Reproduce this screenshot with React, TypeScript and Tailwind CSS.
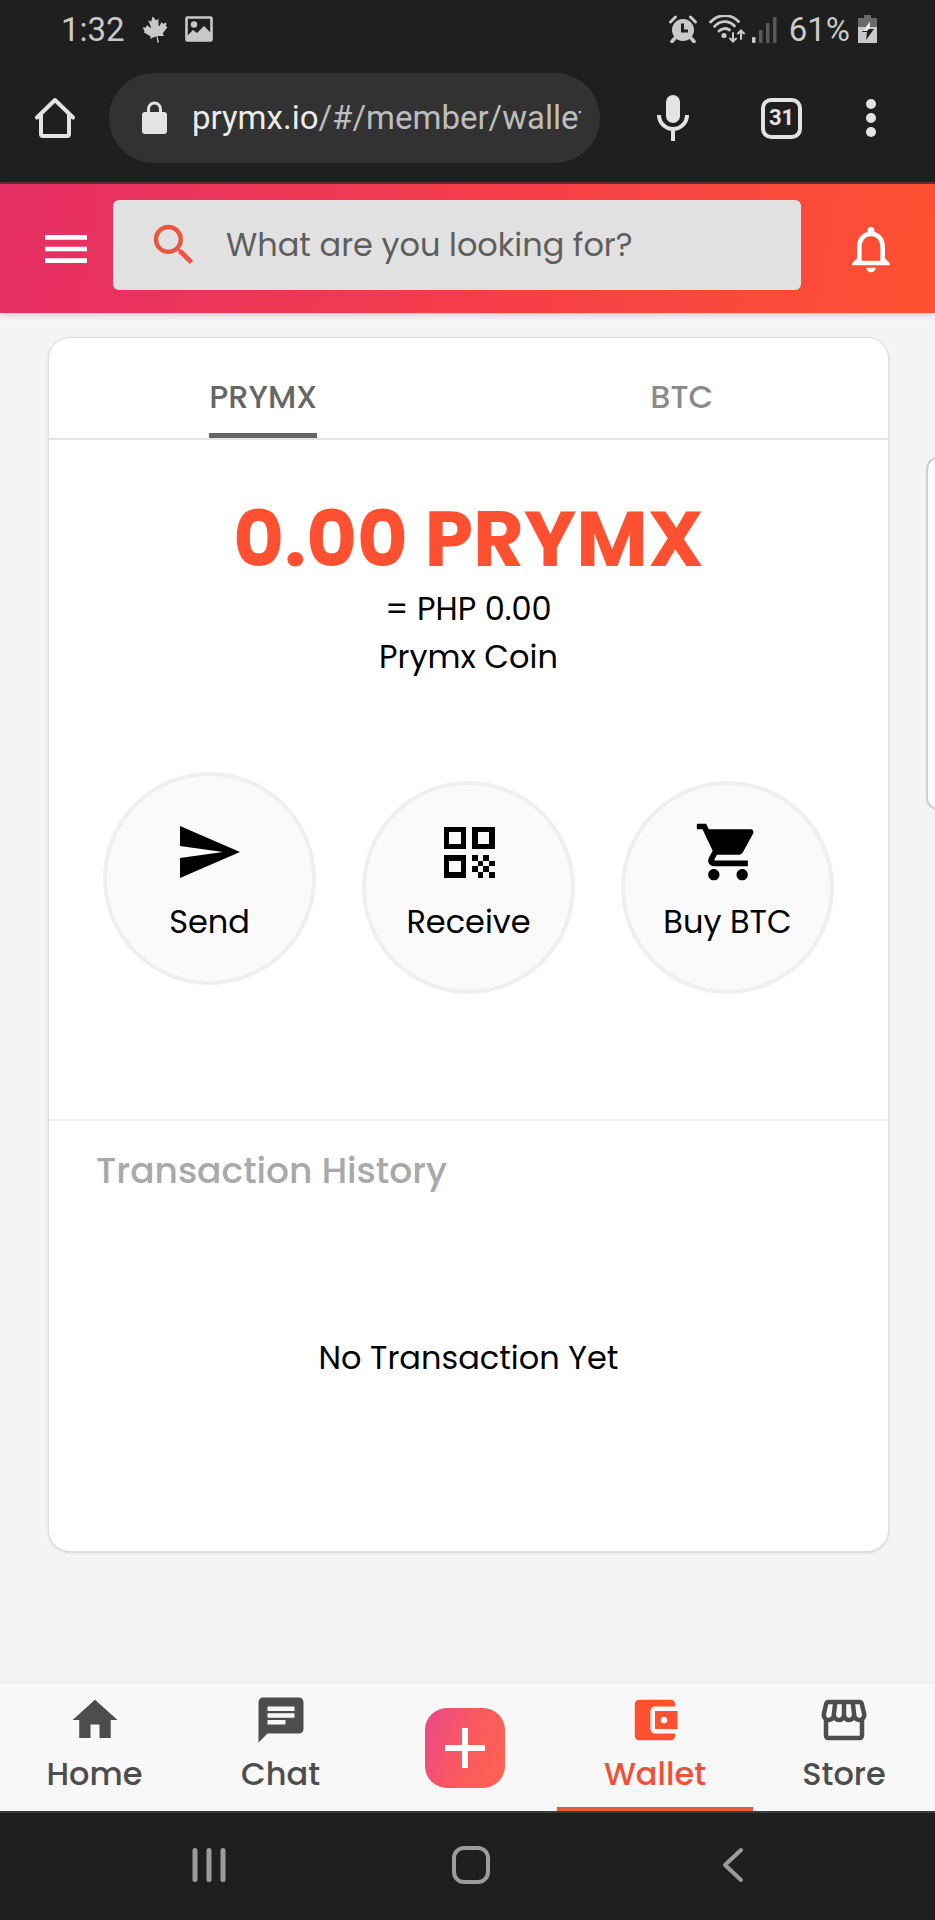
import React, { useState } from "react";
import { FaCanadianMapleLeaf } from "react-icons/fa";
import {
  MdAccountBalanceWallet,
  MdChat,
  MdHome,
  MdMenu,
  MdNotificationsNone,
  MdOutlineStorefront,
  MdSearch,
  MdShoppingCart,
} from "react-icons/md";

const StatusBar: React.FC = () => (
  <div className="flex items-center justify-between h-[58px] pl-[61px] pr-[58px] text-[#c9c9c9] font-['Roboto',sans-serif] text-[33px] leading-none">
    <div className="flex items-center">
      <span>1:32</span>
      <FaCanadianMapleLeaf className="ml-[17px] size-[27px] -rotate-12" />
      <svg className="ml-4 w-7 h-[26px]" viewBox="0 0 28 26" fill="none">
        <rect x="1.5" y="1.5" width="25" height="23" rx="1" stroke="currentColor" strokeWidth="2.6" />
        <circle cx="9" cy="8.5" r="3.2" fill="currentColor" />
        <path d="M2 20l6-6 4 3 7-7 7 7v8H2z" fill="currentColor" />
      </svg>
    </div>
    <div className="flex items-center">
      <svg className="w-7 h-7" viewBox="0 0 28 28" fill="none">
        <circle cx="14" cy="15" r="11" fill="currentColor" />
        <path d="M1.5 7l5-5M26.5 7l-5-5" stroke="currentColor" strokeWidth="3" strokeLinecap="round" />
        <path d="M6 23l-3 3.5M22 23l3 3.5" stroke="currentColor" strokeWidth="3.5" strokeLinecap="round" />
        <path d="M13.5 8.5V16H19" stroke="#1f1f1f" strokeWidth="3" />
      </svg>
      <svg className="ml-3 w-9 h-7" viewBox="0 0 36 28" fill="none" stroke="currentColor" strokeWidth="2.8" strokeLinecap="round">
        <path d="M1.5 7a19 19 0 0 1 28-.5" />
        <path d="M5.5 11.5a13 13 0 0 1 20-.5" />
        <path d="M10 16a8 8 0 0 1 10.5-1" />
        <circle cx="15" cy="20.5" r="1.2" fill="currentColor" />
        <path d="M24 18v8M21 23.500l3 3 3-3M32 24v-8M29 18.500l3-3 3 3" strokeWidth="2" />
      </svg>
      <svg className="ml-1.5 w-[26px] h-[27px]" viewBox="0 0 26 27">
        <rect x="1" y="21" width="3.5" height="6" rx="1" fill="currentColor" />
        <rect x="8" y="14" width="3.5" height="13" rx="1" fill="#5a5a5a" />
        <rect x="15" y="7" width="3.5" height="20" rx="1" fill="#5a5a5a" />
        <rect x="22" y="1" width="3.5" height="26" rx="1" fill="#5a5a5a" />
      </svg>
      <span className="ml-3">61%</span>
      <svg className="ml-2 w-[19px] h-7" viewBox="0 0 19 28">
        <path d="M6 0h7v3h6v10H0V3h6z" fill="#6a6a6a" />
        <path d="M0 12h19v16H0z" fill="currentColor" />
        <path d="M12 6.500L4 17h5l-1 8 8-11h-5z" fill="#1f1f1f" />
        <path d="M12 6.500L4.500 16H9l3-3z" fill="#e8e8e8" />
      </svg>
    </div>
  </div>
);

const BrowserBar: React.FC = () => (
  <div className="flex items-center h-[124px] pb-1 pl-[35px] pr-[59px] text-[#e3e3e3]">
    <button type="button" aria-label="Browser home">
      <svg className="w-10 h-[42px]" viewBox="0 0 40 42" fill="none" stroke="currentColor" strokeWidth="4" strokeLinecap="round" strokeLinejoin="round">
        <path d="M2 20.500L20 3l18 17.500" />
        <path d="M6 18v19a2 2 0 0 0 2 2h24a2 2 0 0 0 2-2V18" />
      </svg>
    </button>
    <div className="flex flex-1 min-w-0 items-center h-[90px] ml-[34px] pl-[33px] pr-[19px] rounded-full bg-[#323232]">
      <svg className="shrink-0 w-[25px] h-[34px]" viewBox="0 0 25 34" fill="none">
        <rect y="11" width="25" height="22" rx="3" fill="currentColor" />
        <path d="M6.5 13V8a6 6 0 0 1 12 0v5" stroke="currentColor" strokeWidth="3" />
      </svg>
      <p className="ml-[25px] overflow-hidden whitespace-nowrap font-['Roboto',sans-serif] text-[33px] leading-[44px] text-[#bdbdbd]">
        <span className="text-[#ececec]">prymx.io</span>/#/member/wallet
      </p>
    </div>
    <button type="button" aria-label="Voice search" className="ml-[57px]">
      <svg className="w-8 h-[46px]" viewBox="0 0 32 46" fill="none">
        <rect x="9" width="14" height="28" rx="7" fill="currentColor" />
        <path d="M2 20a14 14 0 0 0 28 0M16 34v12" stroke="currentColor" strokeWidth="4" />
      </svg>
    </button>
    <button
      type="button"
      aria-label="Open tabs"
      className="ml-[72px] size-[41px] rounded-[10px] border-4 border-[#e3e3e3] font-['Roboto',sans-serif] text-[22px] leading-none font-bold"
    >
      31
    </button>
    <button type="button" aria-label="More" className="flex flex-col gap-1 ml-16">
      <span className="size-2.5 rounded-full bg-[#e3e3e3]" />
      <span className="size-2.5 rounded-full bg-[#e3e3e3]" />
      <span className="size-2.5 rounded-full bg-[#e3e3e3]" />
    </button>
  </div>
);

const SearchHeader: React.FC = () => {
  const [query, setQuery] = useState("");

  return (
    <header className="relative flex items-center h-[129px] pl-[38px] pr-9 bg-linear-100 from-[#e52e64] via-[#f43c4a] to-[#ff5030] text-white shadow-md">
      <button type="button" aria-label="Menu">
        <MdMenu className="size-14" />
      </button>
      <label className="flex flex-1 min-w-0 items-center h-[90px] ml-[19px] mr-[42px] mb-2 pl-[34px] rounded-md bg-[#e1e1e1]">
        <MdSearch className="shrink-0 size-[54px] text-[#e9573f]" />
        <input
          type="text"
          aria-label="Search"
          placeholder="What are you looking for?"
          className="flex-1 min-w-0 ml-[25px] text-[32px] text-[#5e5e5e] placeholder:text-[#5e5e5e] outline-none"
          value={query}
          onChange={(e) => setQuery(e.target.value)}
        />
      </label>
      <button type="button" aria-label="Notifications">
        <MdNotificationsNone className="size-14" />
      </button>
    </header>
  );
};

const SendIcon: React.FC = () => (
  <svg className="w-[60px] h-[68px]" viewBox="0 0 60 68" fill="currentColor">
    <path d="M0 8l60 26L0 60V40l43-6L0 28z" />
  </svg>
);

const QrIcon: React.FC = () => (
  <svg className="w-[52px] h-[68px]" viewBox="0 -1.5 9 12" fill="currentColor" shapeRendering="crispEdges">
    <path
      fillRule="evenodd"
      d="M0 0h4v4H0zM1 1v2h2V1zM5 0h4v4H5zM6 1v2h2V1zM0 5h4v4H0zM1 6v2h2V6z"
    />
    <path d="M5 5h1v1H5zM7 5h1v1H7zM6 6h1v1H6zM8 6h1v1H8zM5 7h1v1H5zM7 7h1v1H7zM6 8h1v1H6zM8 8h1v1H8z" />
  </svg>
);

const actions = [
  { label: "Send", icon: <SendIcon />, className: "pt-[42px]" },
  { label: "Receive", icon: <QrIcon />, className: "mt-[9px] pt-[33px]" },
  {
    label: "Buy BTC",
    icon: <MdShoppingCart className="size-[68px]" />,
    className: "mt-[9px] pt-[33px]",
  },
];

const WalletCard: React.FC = () => {
  const [tab, setTab] = useState("PRYMX");

  return (
    <section className="ml-12 mr-[46px] mt-6 rounded-[22px] border border-[#dedede] bg-white shadow-sm text-center text-[32px] leading-[48px] text-black">
      <div className="flex gap-1.5 h-[102px] pl-2 border-b-2 border-[#e4e4e4] font-medium">
        {["PRYMX", "BTC"].map((name) => (
          <button
            key={name}
            type="button"
            className="flex flex-1 justify-center"
            onClick={() => setTab(name)}
          >
            <span
              className={
                tab === name
                  ? "h-full pt-[35px] border-b-5 border-[#666] text-[#666]"
                  : "h-full pt-[35px] text-[#8b8b8b]"
              }
            >
              {name}
            </span>
          </button>
        ))}
      </div>
      <div className="h-[681px] pt-[53px] border-b-2 border-[#efefef]">
        <h1 className="text-[78px] leading-[92px] font-bold text-[#ff5131]">
          0.00 PRYMX
        </h1>
        <p>= PHP 0.00</p>
        <p>Prymx Coin</p>
        <div className="flex justify-between items-start mt-[91px] mx-[54px]">
          {actions.map((action) => (
            <button
              key={action.label}
              type="button"
              className={`flex flex-col items-center size-[213px] rounded-full border-4 border-[#efefef] bg-[#fafafa] ${action.className}`}
            >
              {action.icon}
              <span className="mt-3 h-12">{action.label}</span>
            </button>
          ))}
        </div>
      </div>
      <h2 className="pt-[26px] pl-[47px] text-left text-[36px] font-medium text-[#a9a9a9]">
        Transaction History
      </h2>
      <p className="pt-[139px] pb-[169px]">No Transaction Yet</p>
    </section>
  );
};

const navItem = "flex flex-col items-center gap-[3px] pt-[9px] border-b-4";

const BottomNav: React.FC = () => (
  <nav className="grid grid-cols-[189fr_183fr_185fr_196fr_182fr] h-[127px] bg-[#f8f8f8] text-[32px] leading-[48px] font-medium text-[#4d4d4d] shadow-[0_-2px_6px_rgba(0,0,0,0.04)]">
    <a href="#home" className={`${navItem} border-transparent`}>
      <MdHome className="size-[54px]" />
      Home
    </a>
    <a href="#chat" className={`${navItem} border-transparent`}>
      <MdChat className="size-[54px]" />
      Chat
    </a>
    <div className="flex items-center justify-center">
      <button
        type="button"
        aria-label="Add"
        className="flex items-center justify-center size-20 rounded-[22px] bg-linear-110 from-[#ea4787] via-[#f9595f] to-[#ff644d] text-white"
      >
        <svg className="size-10" viewBox="0 0 40 40" stroke="currentColor" strokeWidth="6">
          <path d="M20 0v40M0 20h40" />
        </svg>
      </button>
    </div>
    <a href="#wallet" className={`${navItem} border-[#e9573f] text-[#f0503a]`}>
      <MdAccountBalanceWallet className="size-[54px] text-[#ff5030]" />
      Wallet
    </a>
    <a href="#store" className={`${navItem} border-transparent`}>
      <MdOutlineStorefront className="size-[54px]" />
      Store
    </a>
  </nav>
);

const SystemNav: React.FC = () => (
  <div className="flex items-center h-[109px] pl-[78px] pr-[71px] pb-1 border-t-2 border-[#3c3c3c] bg-[#1f1f1f] text-[#9c9c9c]">
    <button type="button" aria-label="Recent apps" className="flex flex-1 justify-center">
      <svg className="w-[34px] h-9" viewBox="0 0 34 36" stroke="currentColor" strokeWidth="5" strokeLinecap="round">
        <path d="M3 3.500v29M17 3.500v29M31 3.500v29" />
      </svg>
    </button>
    <button type="button" aria-label="Home screen" className="flex flex-1 justify-center">
      <svg className="size-[38px]" viewBox="0 0 38 38" fill="none" stroke="currentColor" strokeWidth="4">
        <rect x="2" y="2" width="34" height="34" rx="10" />
      </svg>
    </button>
    <button type="button" aria-label="Back" className="flex flex-1 justify-center">
      <svg className="w-[22px] h-9" viewBox="0 0 22 36" fill="none" stroke="currentColor" strokeWidth="4" strokeLinecap="round" strokeLinejoin="round">
        <path d="M19 3L3 18l16 15" />
      </svg>
    </button>
  </div>
);

const App: React.FC = () => {
  return (
    <div className="flex flex-col min-h-screen bg-[#f4f4f4] font-['Poppins','Inter',sans-serif]">
      <div className="border-b-2 border-[#5a3035] bg-[#1f1f1f]">
        <StatusBar />
        <BrowserBar />
      </div>
      <SearchHeader />
      <main className="relative flex-1 overflow-hidden">
        <WalletCard />
        {/* edge panel handle */}
        <div className="absolute -right-5 top-36 w-[29px] h-[353px] rounded-xl border-2 border-[#cfcfcf] bg-[#fcfcfc]" />
      </main>
      <BottomNav />
      <SystemNav />
    </div>
  );
};

export default App;
